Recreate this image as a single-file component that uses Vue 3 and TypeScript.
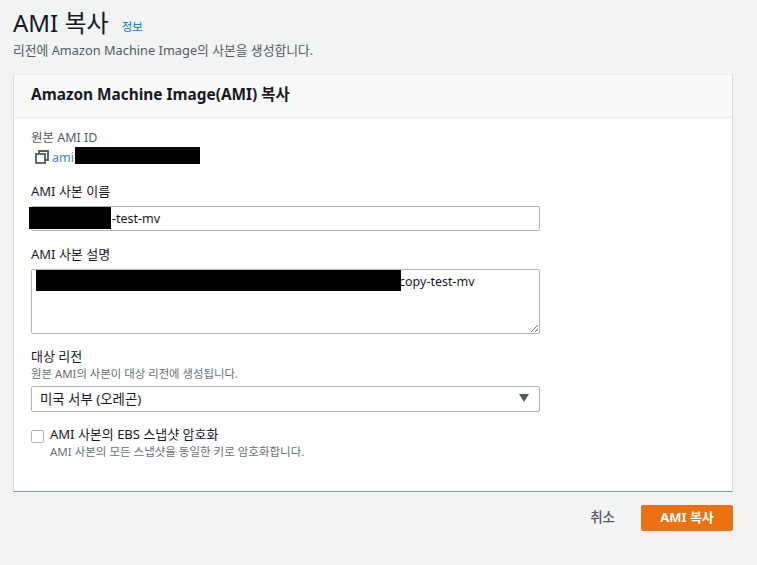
<script setup lang="ts">
const name = '-test-mv'
const desc = 'copy-test-mv'
</script>

<template>
  <div class="page">
    <header class="head">
      <div class="title-row">
        <h1>AMI 복사</h1>
        <a class="info">정보</a>
      </div>
      <p class="sub">리전에 Amazon Machine Image의 사본을 생성합니다.</p>
    </header>

    <section class="card">
      <h2 class="card-head">Amazon Machine Image(AMI) 복사</h2>
      <div class="card-body">
        <div class="field source">
          <div class="muted-label">원본 AMI ID</div>
          <div class="id-row">
            <svg class="copy" width="14" height="14" viewBox="0 0 14 14" fill="none" stroke="#545b64" stroke-width="1.8">
              <rect x="1" y="4" width="9" height="9" />
              <path d="M4 4V1h9v9h-3" />
            </svg>
            <a class="link redact-wrap">ami-<span class="black id-black"></span></a>
          </div>
        </div>

        <div class="field name">
          <label>AMI 사본 이름</label>
          <div class="redact-wrap">
            <input class="input" :value="name" readonly />
            <span class="black name-black"></span>
          </div>
        </div>

        <div class="field desc">
          <label>AMI 사본 설명</label>
          <div class="redact-wrap">
            <textarea class="textarea" :value="desc" readonly></textarea>
            <span class="black desc-black"></span>
          </div>
        </div>

        <div class="field region">
          <label>대상 리전</label>
          <div class="hint">원본 AMI의 사본이 대상 리전에 생성됩니다.</div>
          <div class="select">
            <span>미국 서부 (오레곤)</span>
            <svg width="10" height="8" viewBox="0 0 10 8"><path d="M0 0h10L5 8z" fill="#545b64" /></svg>
          </div>
        </div>

        <div class="check-row">
          <span class="box"></span>
          <div>
            <div class="check-label">AMI 사본의 EBS 스냅샷 암호화</div>
            <div class="hint check-hint">AMI 사본의 모든 스냅샷을 동일한 키로 암호화합니다.</div>
          </div>
        </div>
      </div>
    </section>

    <footer class="actions">
      <a class="cancel">취소</a>
      <button class="primary">AMI 복사</button>
    </footer>
  </div>
</template>

<style>
html, body { margin: 0; background: #f2f3f3; }
</style>

<style scoped>
.page {
  width: 757px;
  height: 565px;
  box-sizing: border-box;
  padding: 7px 24px 0 13px;
  background: #f2f3f3;
  overflow: hidden;
  font-family: "Noto Sans", "Noto Sans CJK KR", sans-serif;
  font-size: 13px;
  color: #16191f;
}
.title-row { display: flex; align-items: flex-start; gap: 13px; }
h1 { margin: 0; font-size: 24px; line-height: 32px; font-weight: 400; }
.info { font-size: 11.5px; line-height: 16px; margin-top: 12px; color: #0073bb; }
.sub { margin: 3px 0 0; font-size: 12.8px; line-height: 17px; color: #545b64; }
.card {
  margin-top: 15px;
  height: 418px;
  box-sizing: border-box;
  background: #fff;
  border-left: 1px solid #d5dbdb;
  border-right: 1px solid #d5dbdb;
  border-top: 1px solid #eaeded;
  border-bottom: 1px solid #8d9696;
}
.card-head {
  margin: 0;
  height: 43px;
  box-sizing: border-box;
  padding: 0 17px 5px;
  display: flex;
  align-items: center;
  font-size: 15.4px;
  font-weight: 700;
  background: #fafafa;
  border-bottom: 1px solid #eaeded;
}
.card-body { padding: 11px 192px 0 17px; }
.field label, .muted-label { display: block; font-size: 13px; line-height: 17px; }
.field .muted-label { font-size: 12.5px; color: #545b64; }
.id-row { display: flex; align-items: center; gap: 3px; padding-left: 4px; height: 18px; margin-top: 2px; }
.link { color: #3f7fc4; font-size: 12.5px; }
.redact-wrap { position: relative; display: block; }
.black { position: absolute; background: #000; display: block; }
.id-black { left: 23px; top: -2px; width: 125px; height: 17px; }
.name { margin-top: 17px; }
.input {
  display: block;
  width: 100%;
  height: 25px;
  box-sizing: border-box;
  border: 1px solid #aab7b8;
  border-radius: 2px;
  padding: 0 9px 0 80px;
  font: inherit;
  font-size: 12.5px;
  color: #16191f;
  outline: none;
  margin-top: 6px;
}
.name-black { left: -2px; top: 1px; width: 82px; height: 22px; }
.desc { margin-top: 15px; }
.textarea {
  display: block;
  width: 100%;
  height: 65px;
  box-sizing: border-box;
  border: 1px solid #aab7b8;
  border-radius: 2px;
  padding: 3px 9px 0 367px;
  font: inherit;
  font-size: 12.5px;
  color: #16191f;
  outline: none;
  margin-top: 6px;
  resize: vertical;
}
.desc-black { left: 5px; top: 1px; width: 365px; height: 21px; }
.region { margin-top: 14px; }
.hint { font-size: 11.4px; line-height: 14px; margin-top: 2px; color: #687078; }
.check-hint { font-size: 11.5px; }
.select {
  margin-top: 5px;
  height: 26px;
  box-sizing: border-box;
  border: 1px solid #aab7b8;
  border-radius: 2px;
  display: flex;
  align-items: center;
  justify-content: space-between;
  padding: 0 10px 2px 8px;
  font-size: 13.4px;
}
.check-row { display: flex; gap: 6px; margin-top: 14px; }
.box {
  width: 11px;
  height: 11px;
  margin-top: 4px;
  border: 1px solid #aab7b8;
  border-radius: 2px;
  background: #fff;
  flex: none;
}
.check-label { font-size: 13px; line-height: 17px; }
.actions {
  display: flex;
  justify-content: flex-end;
  align-items: center;
  gap: 26px;
  margin-top: 13px;
}
.cancel { font-size: 13.5px; color: #545b64; font-weight: 500; padding-bottom: 4px; }
.primary {
  width: 92px;
  height: 26px;
  border: 0;
  border-radius: 2px;
  background: #ec7211;
  color: #fff;
  font: inherit;
  font-size: 13px;
  font-weight: 700;
  padding: 0 0 3px;
}
</style>
